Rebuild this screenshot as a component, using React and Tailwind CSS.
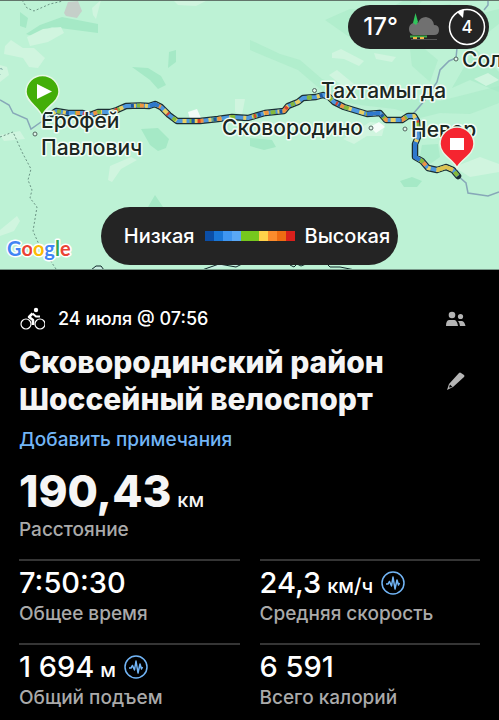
import React from 'react'

const ROUTE =
  'M52 114 L56 111 L68 113 L82 113 L90 115 L98 112 L110 112 L117 110 L126 106 L140 105.500 L149 106 L155 104 L161 107 L169 115 L177 121 L200 121 L218 119 L232 117 L248 118 L265 113 L284 111 L288 106 L298 102 L303 98 L316 97 L323 95 L329 97 L334 102 L344 107 L367 114 L380 113 L386 120 L402 120 L408 116 L414 116 L417 121 L418 137 L415 144 L415 157 L422 161 L428 168 L437 170 L446 167 L453 170 L458 176'

const ROUTE_LAYERS = [
  { color: '#4f98dc', dash: 'none' },
  { color: '#e9cf62', dash: '4 8 5 9 3 6' },
  { color: '#86b93a', dash: '0 6 4 14 5 12' },
  { color: '#1c58a6', dash: '0 15 3 19 3 27' },
  { color: '#ee9440', dash: '0 25 4 14 4 19' },
  { color: '#d8412c', dash: '0 32 2 31 3 22' },
]

const LEGEND = [
  'bg-[#0b4ea6]',
  'bg-[#1976d6]',
  'bg-[#3f96f0]',
  'bg-[#5aa8f5]',
  'bg-[#76c81e]',
  'bg-[#76c81e]',
  'bg-[#ffd24a]',
  'bg-[#fb8c2c]',
  'bg-[#ee6c12]',
  'bg-[#d9201c]',
]

const PLACES = [
  { name: 'Ерофей', x: 41, y: 128 },
  { name: 'Павлович', x: 41, y: 155 },
  { name: 'Сковородино', x: 222, y: 135 },
  { name: 'Тахтамыгда', x: 321, y: 98 },
  { name: 'Невер', x: 411, y: 137 },
  { name: 'Сол', x: 462, y: 67 },
]

const GOOGLE = [
  ['G', '#4285f4'],
  ['o', '#ea4335'],
  ['o', '#fbbc05'],
  ['g', '#4285f4'],
  ['l', '#34a853'],
  ['e', '#ea4335'],
]

const RouteMap = () => (
  <svg viewBox="0 0 499 270" className="block w-full" role="img" aria-label="Карта маршрута">
    <rect width="499" height="270" fill="#bdf2d5" />

    {/* forest */}
    <g fill="#a5e9c6">
      <path d="M26 34 L40 25 L62 17 L98 24 L98 33 L52 27 L32 36Z" />
      <path d="M132 67 L148 68 L161 76 L166 85 L158 89 L150 80Z" />
      <path d="M169 52 L176 50 L176 62 L168 68Z" />
      <path d="M141 129 L158 128 L169 139 L166 148 L158 151 L150 145Z" />
      <path d="M148 207 L155 195 L163 207Z" />
      <path d="M20 12 L28 18 L26 28 L20 26Z" />
      <path d="M400 181 L412 177 L422 181 L417 187 L404 187Z" />
      <path d="M250 138 L272 140 L276 147 L264 150 L250 146Z" />
      <path d="M250 40 L280 54 L300 60 L322 79 L350 88 L372 84 L395 97 L440 101 L499 86 L499 103 L470 114 L440 113 L420 118 L395 109 L360 105 L333 100 L298 70 L250 50Z" opacity=".5" />
      <path d="M405 0 L423 0 L415 9 L450 4 L467 17 L499 9 L499 24 L478 40 L420 45 L438 60 L430 82 L412 66 L410 49 L365 48 L325 20 L350 9 L384 11Z" opacity=".5" />
      <path d="M475 48 L499 72 L499 92 L470 80 L452 88Z" opacity=".6" />
      <path d="M422 145 L438 144 L440 157 L430 164 L420 156Z" opacity=".7" />
    </g>

    {/* open ground */}
    <g fill="#d0f5df">
      <path d="M27 37 L43 29 L61 27 L64 33 L48 42 L30 46Z" />
      <path d="M5 46 L11 40 L23 48 L34 48 L45 58 L38 68 L29 67 L23 58 L4 54Z" />
      <path d="M92 8 L101 0 L96 19 L93 15Z" />
      <path d="M173 0 L208 0 L196 6 L178 5Z" />
      <path d="M332 53 L341 49 L364 61 L359 66 L344 59 L332 58Z" />
      <path d="M329 75 L337 70 L354 84 L345 88Z" />
      <path d="M110 166 L131 157 L137 160 L121 169 L112 182 L108 180Z" />
      <path d="M0 230 L17 216 L20 221 L14 231 L0 236Z" />
      <path d="M0 65 L7 67 L9 75 L0 82Z" />
      <path d="M235 99 L245 99 L242 115 L235 112Z" />
      <path d="M454 167 L480 157 L499 164 L499 172 L470 177Z" />
      <path d="M474 79 L488 73 L499 80 L486 86Z" />
      <path d="M343 139 L354 144 L367 136 L382 136 L385 124 L370 122Z" />
      <path d="M374 53 L396 57 L392 62 L376 59Z" />
      <path d="M0 135 L20 131 L25 139 L4 141Z" />
    </g>
    <path d="M64 13 L68 2 L78 1 L82 11 L77 18 L66 16Z" fill="#c5cfc9" />
    <path d="M188 112 L197 109 L201 118 L190 119Z M370 127 L379 122 L385 127 L376 133Z" fill="#f4fcf8" />

    {/* borders and roads */}
    <g fill="none" stroke="#6b9484" strokeDasharray="2 2">
      <path d="M22 0 L27 8 L34 11 L50 4 L63 1" />
      <path d="M0 137 L13 132 L22 152 L31 169 L28 180 L32 190 L30 198 L37 207 L33 231 L41 249 L50 260 L56 269" />
    </g>
    <g fill="none" stroke="#87a8b8" strokeWidth="1.500">
      <path d="M0 100 L9 105 L13 113 L27 119 L31 129 L41 122 L50 115" />
      <path d="M488 0 L488 5 L484 10 M457 48 L456 58 L449 61 L440 70 L437 82 L425 100 L413 114" />
      <path d="M458 176 L466 183 L468 193 L488 196 L499 192" />
    </g>
    <g fill="#c9eee2" stroke="#102a2a">
      <path d="M91 270 L96 266 L101 266 L104 270" />
      <path d="M202 270 L219 264 L236 267 L242 264" />
      <path d="M290 265 L294 267 L297 264 L301 266 L306 264 M328 265 L330 267 L340 267 L355 270" fill="none" />
    </g>
    <path d="M0 75 C-3 68 3 67 2 70" fill="none" stroke="#7ba8a5" />

    {/* route */}
    <g fill="none" strokeLinejoin="round">
      <path d={ROUTE} stroke="#1b2f33" strokeWidth="6.500" strokeLinecap="round" />
      {ROUTE_LAYERS.map((l) => (
        <path key={l.color} d={ROUTE} stroke={l.color} strokeWidth="4" strokeDasharray={l.dash} />
      ))}
      <path d="M150 106 L155 104 L159 106 M367 114 L380 113 M416 142 L415 145 L415 157 L420 160" stroke="#2f78cc" strokeWidth="4" />
      <path d="M437 170 L446 167 L453 170" stroke="#dcc351" strokeWidth="4" />
    </g>

    {/* place names */}
    <g fill="#dff5ea" stroke="#53665f">
      <circle cx="35" cy="134" r="2" />
      <circle cx="314.500" cy="90.500" r="2" />
      <circle cx="371" cy="128" r="2" />
      <circle cx="405" cy="129" r="2" />
      <circle cx="456" cy="59" r="2" />
    </g>
    <g
      className="font-[Inter,sans-serif] text-[21px] font-medium"
      fill="#1b2722"
      stroke="#f2fdf7"
      strokeWidth="3"
      strokeLinejoin="round"
      paintOrder="stroke"
    >
      {PLACES.map((p) => (
        <text key={p.name} x={p.x} y={p.y}>
          {p.name}
        </text>
      ))}
    </g>

    {/* start and finish pins */}
    <g stroke="#e6f8e6" strokeWidth="1.500">
      <path d="M42 116 C39 107 26 102 26 92 A16.500 16.500 0 0 1 59 92 C59 102 45 107 42 116Z" fill="#43ae08" />
      <path d="M457 168 C454 160 440 155 440 144 A17 17 0 0 1 474 144 C474 155 460 160 457 168Z" fill="#f52530" />
    </g>
    <path d="M37 84 L52 91.500 L37 99Z" fill="#fff" />
    <rect x="450" y="138" width="14" height="12" fill="#fff" />

    <text
      x="7"
      y="256"
      className="font-[Lato,sans-serif] text-[20px] font-bold"
      stroke="#fff"
      strokeWidth="3"
      strokeLinejoin="round"
      paintOrder="stroke"
    >
      {GOOGLE.map(([letter, color], i) => (
        <tspan key={i} fill={color}>
          {letter}
        </tspan>
      ))}
    </text>
    <path d="M0 0.500 H499" stroke="#62756b" />
    <path d="M0 269.500 H499" stroke="#79998a" />
  </svg>
)

const WeatherIcon = () => (
  <svg viewBox="0 0 34 28" className="h-7 w-[34px]" aria-hidden="true">
    <path d="M7 22 A6.500 6.500 0 0 1 7 10 Q9 9 12 10 Q14 4 20 4 Q27 5 28 12 Q33 12 33 17 Q33 22 28 22Z" fill="#707070" />
    <path d="M9.500 0 L7 10 L10 12 L12 9Z" fill="#31c55c" />
    <path d="M5 26.500 H31" stroke="#555" />
    <path d="M4 23.500 H21" stroke="#3faa4b" strokeWidth="2" />
    <path d="M7 25 H11 M14 25 H18" stroke="#f0b544" strokeWidth="2" />
  </svg>
)

const WindDial = () => (
  <svg viewBox="0 0 38 38" className="size-[38px]" role="img" aria-label="Ветер 4">
    <circle cx="19" cy="19" r="17.500" fill="none" stroke="#fff" strokeWidth="1.500" />
    <path d="M9 4 L16 1 L15 10Z" fill="#fff" />
    <text x="19" y="25" textAnchor="middle" fill="#fff" className="text-[17px] font-medium">
      4
    </text>
  </svg>
)

const CyclistIcon = () => (
  <svg viewBox="0 0 26 24" className="h-6 w-[26px] shrink-0" fill="none" stroke="#fff" aria-hidden="true">
    <circle cx="7" cy="17" r="5" strokeWidth="1.200" />
    <circle cx="21" cy="17" r="5" strokeWidth="1.200" />
    <circle cx="17" cy="3" r="2.200" fill="#fff" stroke="none" />
    <path d="M13.500 6.500 L10 10 L14 13 V18" strokeWidth="2.500" strokeLinejoin="round" />
    <path d="M13.500 6.500 L17 9.500 H21" strokeWidth="2" strokeLinejoin="round" />
  </svg>
)

const PulseIcon = () => (
  <svg viewBox="0 0 24 24" className="size-6 shrink-0" fill="none" stroke="#72b5f6" strokeLinejoin="round" aria-hidden="true">
    <circle cx="12" cy="12" r="11" strokeWidth="1.500" />
    <path d="M5 13 H7 L8.500 10.500 L10.500 15 L12 6 L14 18 L16 9 L17.500 14 L18.500 12" strokeWidth="1.500" />
  </svg>
)

const Stat = ({ value, unit, label, hasPulse }) => (
  <div className="flex h-[84px] flex-col border-t-2 border-[#353535] pt-1">
    <dd className="flex h-9 items-center gap-2 text-[29px] leading-9 font-medium">
      <span>
        {value}
        {unit && <span className="ml-1.5 text-[20px] leading-none">{unit}</span>}
      </span>
      {hasPulse && <PulseIcon />}
    </dd>
    <dt className="text-[19px] leading-[26px] font-medium text-[#aaa]">{label}</dt>
  </div>
)

const App = () => (
  <main className="min-h-screen bg-black font-[Inter,sans-serif] text-white">
    <section className="relative overflow-hidden">
      <RouteMap />
      <div className="absolute top-[5px] right-[10px] flex h-11 items-center gap-2 rounded-full bg-[#242424] pr-[3px] pl-[15px]">
        <span className="text-2xl font-medium">17°</span>
        <WeatherIcon />
        <WindDial />
      </div>
      <div className="absolute inset-x-0 bottom-[5px] flex justify-center">
        <div className="flex h-[58px] items-center gap-2.5 rounded-full bg-[#242424] pr-2 pl-[23px] text-[20px] font-medium">
          <span>Низкая</span>
          <div className="flex">
            {LEGEND.map((c, i) => (
              <span key={i} className={`h-2.5 w-[9px] ${c}`} />
            ))}
          </div>
          <span>Высокая</span>
        </div>
      </div>
    </section>

    <section className="px-[19px]">
      <header className="flex items-center justify-between pt-[37px] pr-[14px]">
        <div className="flex items-center gap-[13px]">
          <CyclistIcon />
          <time className="text-lg leading-6 font-medium">24 июля @ 07:56</time>
        </div>
        <button type="button" aria-label="Доступ">
          <svg viewBox="0 0 22 16" className="h-4 w-[22px]" fill="#b5b5b5" aria-hidden="true">
            <circle cx="8" cy="4" r="3.300" />
            <circle cx="16.500" cy="5.500" r="2.600" />
            <path d="M2 15 Q2 9.500 5 9 H10.500 Q13 9.500 14 15Z M14 10 H18 Q20.500 10.500 21.500 15 H16 Q15.500 11.500 14 10Z" />
          </svg>
        </button>
      </header>

      <div className="mt-[13px] flex items-center justify-between pr-[14px]">
        <h1 className="text-[30px] leading-[37px] font-extrabold text-[#f5f5f5]">
          Сковородинский район
          <br />
          Шоссейный велоспорт
        </h1>
        <button type="button" aria-label="Изменить">
          <svg viewBox="0 0 22 20" className="h-5 w-[22px]" fill="#b5b5b5" aria-hidden="true">
            <path d="M3 19 L5 13 L15 2 Q16 1 17 2 L20 4 Q21 5 20 6 L9 16Z" />
            <path d="M5 16.500 L6 13.500 L8.500 16Z" fill="#000" />
          </svg>
        </button>
      </div>

      <a href="#notes" className="mt-[10px] block text-[19px] leading-6 font-medium text-[#72b5f6]">
        Добавить примечания
      </a>

      <dl>
        <div className="mt-[14px] pb-[17px]">
          <dd className="h-[52px] text-[44px] leading-[50px] font-extrabold text-[#f5f5f5]">
            190,43
            <span className="ml-1.5 text-[20px] leading-none font-medium">км</span>
          </dd>
          <dt className="text-[19px] leading-6 font-medium text-[#aaa]">Расстояние</dt>
        </div>
        <div className="grid grid-cols-2 gap-x-5">
          <Stat value="7:50:30" label="Общее время" />
          <Stat value="24,3" unit="км/ч" label="Средняя скорость" hasPulse />
          <Stat value="1 694" unit="м" label="Общий подъем" hasPulse />
          <Stat value="6 591" label="Всего калорий" />
        </div>
      </dl>
    </section>
  </main>
)

export default App
